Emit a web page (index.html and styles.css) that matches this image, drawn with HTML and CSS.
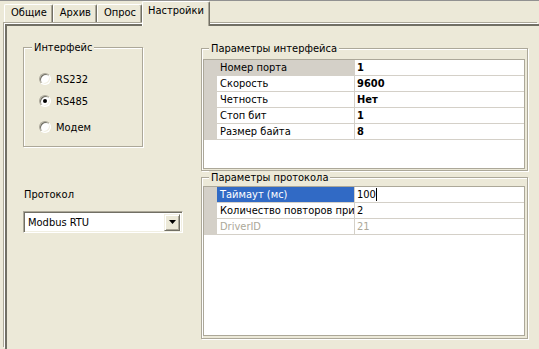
FILE: index.html
```html
<!DOCTYPE html>
<html>
  <head>
    <meta charset="UTF-8" />
    <link rel="stylesheet" href="styles.css">
  </head>
  <body>
    <div class="tabs">
      <div class="tab">Общие</div>
      <div class="tab">Архив</div>
      <div class="tab">Опрос</div>
      <div class="tab active">Настройки</div>
    </div>

    <div class="page">
      <div class="left-col">
        <fieldset class="group iface-group">
          <legend>Интерфейс</legend>
          <div class="radio-list">
            <label class="radio"><span class="radio-mark"></span>RS232</label>
            <label class="radio second"><span class="radio-mark checked"></span>RS485</label>
            <label class="radio third"><span class="radio-mark"></span>Модем</label>
          </div>
        </fieldset>

        <div class="field-label">Протокол</div>
        <div class="combo">
          <span class="combo-text">Modbus RTU</span>
          <span class="combo-btn">
            <svg width="7" height="4" viewBox="0 0 7 4"><path d="M0 0h7L3.5 4z" fill="#000"/></svg>
          </span>
        </div>
      </div>

      <div class="right-col">
        <fieldset class="group params-group">
          <legend>Параметры интерфейса</legend>
          <div class="prop-grid grid-iface">
            <div class="prop-row">
              <span class="gutter"></span>
              <span class="prop-name inactive-sel">Номер порта</span>
              <span class="prop-value bold">1</span>
            </div>
            <div class="prop-row">
              <span class="gutter"></span>
              <span class="prop-name">Скорость</span>
              <span class="prop-value bold">9600</span>
            </div>
            <div class="prop-row">
              <span class="gutter"></span>
              <span class="prop-name">Четность</span>
              <span class="prop-value bold">Нет</span>
            </div>
            <div class="prop-row">
              <span class="gutter"></span>
              <span class="prop-name">Стоп бит</span>
              <span class="prop-value bold">1</span>
            </div>
            <div class="prop-row">
              <span class="gutter"></span>
              <span class="prop-name">Размер байта</span>
              <span class="prop-value bold">8</span>
            </div>
          </div>
        </fieldset>

        <fieldset class="group protocol-group">
          <legend>Параметры протокола</legend>
          <div class="prop-grid grid-protocol">
            <div class="prop-row">
              <span class="gutter"></span>
              <span class="prop-name selected">Таймаут (мс)</span>
              <span class="prop-value"><span class="editing">100</span></span>
            </div>
            <div class="prop-row">
              <span class="gutter"></span>
              <span class="prop-name">Количество повторов при</span>
              <span class="prop-value">2</span>
            </div>
            <div class="prop-row disabled">
              <span class="gutter"></span>
              <span class="prop-name">DriverID</span>
              <span class="prop-value">21</span>
            </div>
          </div>
        </fieldset>
      </div>
    </div>
  </body>
</html>
```

FILE: styles.css
```css
html,
body {
  height: 100%;
}
body {
  margin: 0;
  background: #ece9d8;
  font-family: "DejaVu Sans Condensed", "DejaVu Sans", sans-serif;
  font-size: 11px;
  color: #000;
  border-top: 1px solid #919191;
  overflow: hidden;
}

/* tab strip */
.tabs {
  display: flex;
  align-items: flex-end;
  height: 21px;
  padding-left: 4px;
}
.tab {
  height: 17px;
  line-height: 16px;
  padding: 0 5px 0 6px;
  border-top: 1px solid #fff;
  border-left: 1px solid #fff;
  border-right: 1px solid #716f64;
  box-shadow: inset -1px 0 0 #aca899;
  border-radius: 2px 2px 0 0;
}
.tab.active {
  position: relative;
  z-index: 1;
  height: 24px;
  line-height: 18px;
  margin-bottom: -4px;
  padding: 0 5px;
  background: #ece9d8;
}

/* tab page */
.page {
  display: flex;
  gap: 18px;
  height: 308px;
  margin: 2px 0 0 5px;
  padding: 15px 0 0 16px;
  border-top: 2px solid #716f64;
  border-left: 2px solid #716f64;
  box-shadow: -1px -1px 0 #fff, -2px -2px 0 #aca899;
}

.group {
  box-sizing: border-box;
  margin: 0;
  border: 1px solid #aca899;
  box-shadow: inset 1px 1px 0 #fff, 1px 1px 0 #fff;
}
.group legend {
  margin-left: 6px;
  padding: 0 2px;
  line-height: 13px;
  background: #ece9d8;
}

.left-col {
  width: 160px;
  display: flex;
  flex-direction: column;
  align-items: flex-start;
}
.iface-group {
  width: 120px;
  height: 106px;
  padding: 0 0 0 15px;
}
.iface-group legend {
  margin-left: -7px;
}
.radio-list {
  display: flex;
  flex-direction: column;
  margin-top: 18px;
}
.radio {
  display: flex;
  align-items: center;
  gap: 5px;
  height: 14px;
}
.radio.second {
  margin-top: 8px;
}
.radio.third {
  margin-top: 12px;
}
.radio-mark {
  box-sizing: border-box;
  width: 12px;
  height: 12px;
  border-radius: 50%;
  border: 1px solid;
  border-color: #aca899 #fff #fff #aca899;
  background: #fff;
  box-shadow: inset 1px 1px 0 #716f64, inset -1px -1px 0 #f1efe2;
  display: flex;
  align-items: center;
  justify-content: center;
}
.radio-mark.checked::after {
  content: "";
  width: 4px;
  height: 4px;
  border-radius: 50%;
  background: #000;
}

.field-label {
  margin-top: 41px;
  line-height: 13px;
  padding-left: 1px;
}
.combo {
  box-sizing: border-box;
  display: flex;
  align-items: center;
  justify-content: space-between;
  width: 160px;
  height: 22px;
  margin-top: 10px;
  padding: 0 2px 0 4px;
  background: #fff;
  border: 1px solid;
  border-color: #aca899 #fff #fff #aca899;
  box-shadow: inset 1px 1px 0 #716f64, inset -1px -1px 0 #f1efe2;
}
.combo-btn {
  box-sizing: border-box;
  display: flex;
  align-items: center;
  justify-content: center;
  width: 16px;
  height: 17px;
  background: #ece9d8;
  border: 1px solid;
  border-color: #f1efe2 #716f64 #716f64 #f1efe2;
  box-shadow: inset 1px 1px 0 #fff, inset -1px -1px 0 #aca899;
}

/* property grids */
.right-col {
  width: 327px;
}
.params-group {
  width: 327px;
  height: 129px;
  margin-top: 1px;
  padding: 0 2px 1px 1px;
}
.protocol-group {
  width: 327px;
  height: 168px;
  padding: 0 2px 1px 1px;
}
.prop-grid {
  box-sizing: border-box;
  background: #fff;
  border: 1px solid #aca899;
}
.grid-iface {
  height: 110px;
  margin-top: 4px;
}
.grid-protocol {
  height: 150px;
  margin-top: 2px;
}
.prop-row {
  display: grid;
  grid-template-columns: 13px 138px 1fr;
  height: 16px;
  line-height: 15px;
}
.gutter {
  background: #d4d0c8;
}
.prop-name,
.prop-value {
  border-bottom: 1px solid #d4d0c8;
  white-space: nowrap;
  overflow: hidden;
}
.prop-name {
  padding-left: 3px;
  border-right: 1px solid #d4d0c8;
}
.prop-value {
  padding-left: 2px;
}
.bold {
  font-weight: bold;
}
.inactive-sel {
  background: #d4d0c8;
}
.selected {
  background: #316ac5;
  color: #fff;
}
.editing {
  border-right: 1px solid #000;
  padding-right: 0;
}
.disabled {
  color: #aca899;
}
```
